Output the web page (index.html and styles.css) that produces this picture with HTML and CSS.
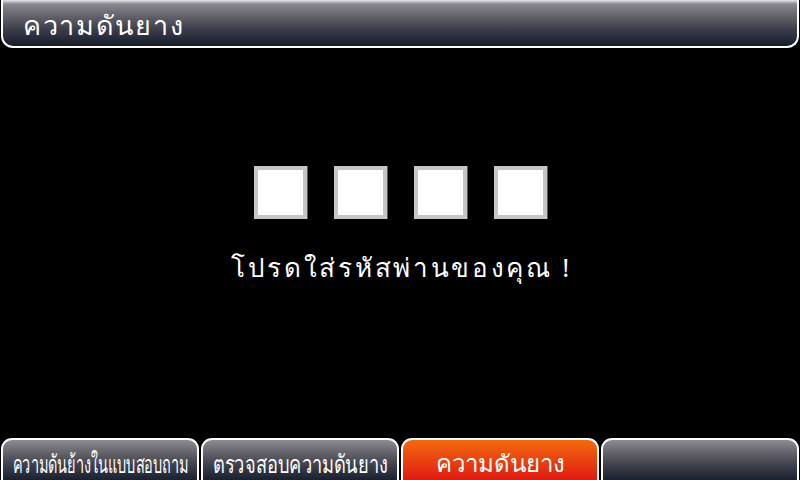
FILE: index.html
```html
<!DOCTYPE html>
<html lang="th">
<head>
<meta charset="utf-8">
<link rel="stylesheet" href="styles.css">
</head>
<body>
<div class="screen">
  <header class="title-bar"><span class="title">ความดันยาง</span></header>
  <main class="content">
    <div class="pin-boxes">
      <div class="pin-box"></div>
      <div class="pin-box"></div>
      <div class="pin-box"></div>
      <div class="pin-box"></div>
    </div>
    <p class="prompt">โปรดใส่รหัสพ่านของคุณ !</p>
  </main>
  <nav class="tabs">
    <div class="tab"><span class="tab-label narrow narrow-1">ความดันย้างในแบบสอบถาม</span></div>
    <div class="tab"><span class="tab-label narrow narrow-2">ตรวจสอบความดันยาง</span></div>
    <div class="tab active"><span class="tab-label big">ความดันยาง</span></div>
    <div class="tab"></div>
  </nav>
</div>
</body>
</html>
```
FILE: styles.css
```css
html, body {
  margin: 0;
  padding: 0;
  background: #000;
}
body {
  width: 800px;
  height: 480px;
  overflow: hidden;
  font-family: "Noto Sans", "DejaVu Sans", sans-serif;
  color: #fff;
}
.screen {
  width: 800px;
  height: 480px;
  display: flex;
  flex-direction: column;
}
.title-bar {
  height: 46px;
  box-sizing: content-box;
  margin: 0 1px;
  border: 2px solid #fff;
  border-top: none;
  border-radius: 0 0 12px 12px;
  background: linear-gradient(to bottom, #e8e8ea 0px, #8a8790 4px, #6a6870 14px, #3a3c48 30px, #161c2a 46px);
  display: flex;
  align-items: center;
  padding-left: 20px;
}
.title {
  font-size: 27px;
  letter-spacing: 1.7px;
  line-height: 1;
  margin-top: 3px;
}
.content {
  flex: 1;
  display: flex;
  flex-direction: column;
  align-items: center;
}
.pin-boxes {
  margin-top: 118px;
  display: flex;
  gap: 27px;
  margin-left: 1px;
}
.pin-box {
  width: 45px;
  height: 45px;
  background: #fff;
  border: 4px solid #c6c6c6;
  box-shadow: 1px 0 0 #5a5a5a;
}
.prompt {
  margin: 33px 0 0 3px;
  font-size: 26px;
  letter-spacing: 2.7px;
  line-height: 1.2;
}
.tabs {
  height: 42px;
  display: flex;
}
.tab {
  flex: 1;
  margin: 0 1px;
  border: 2px solid #fff;
  border-bottom: none;
  border-radius: 11px 11px 0 0;
  background: linear-gradient(to bottom, #8e8c94 0px, #6c6a72 10px, #3c3e4a 26px, #1a2030 40px);
  display: flex;
  align-items: center;
  justify-content: center;
  overflow: hidden;
  min-width: 0;
}
.tab.active {
  background: linear-gradient(to bottom, #f26a0e 0px, #ec4a10 16px, #e01a12 40px);
}
.tab-label {
  white-space: nowrap;
  line-height: 1;
}
.narrow {
  font-size: 25px;
  display: inline-block;
  flex: none;
  margin: 6px -100px 0;
}
.narrow-1 {
  transform: scaleX(0.58);
}
.narrow-2 {
  transform: scaleX(0.73);
}
.big {
  font-size: 24px;
  margin-top: 5px;
}
```
